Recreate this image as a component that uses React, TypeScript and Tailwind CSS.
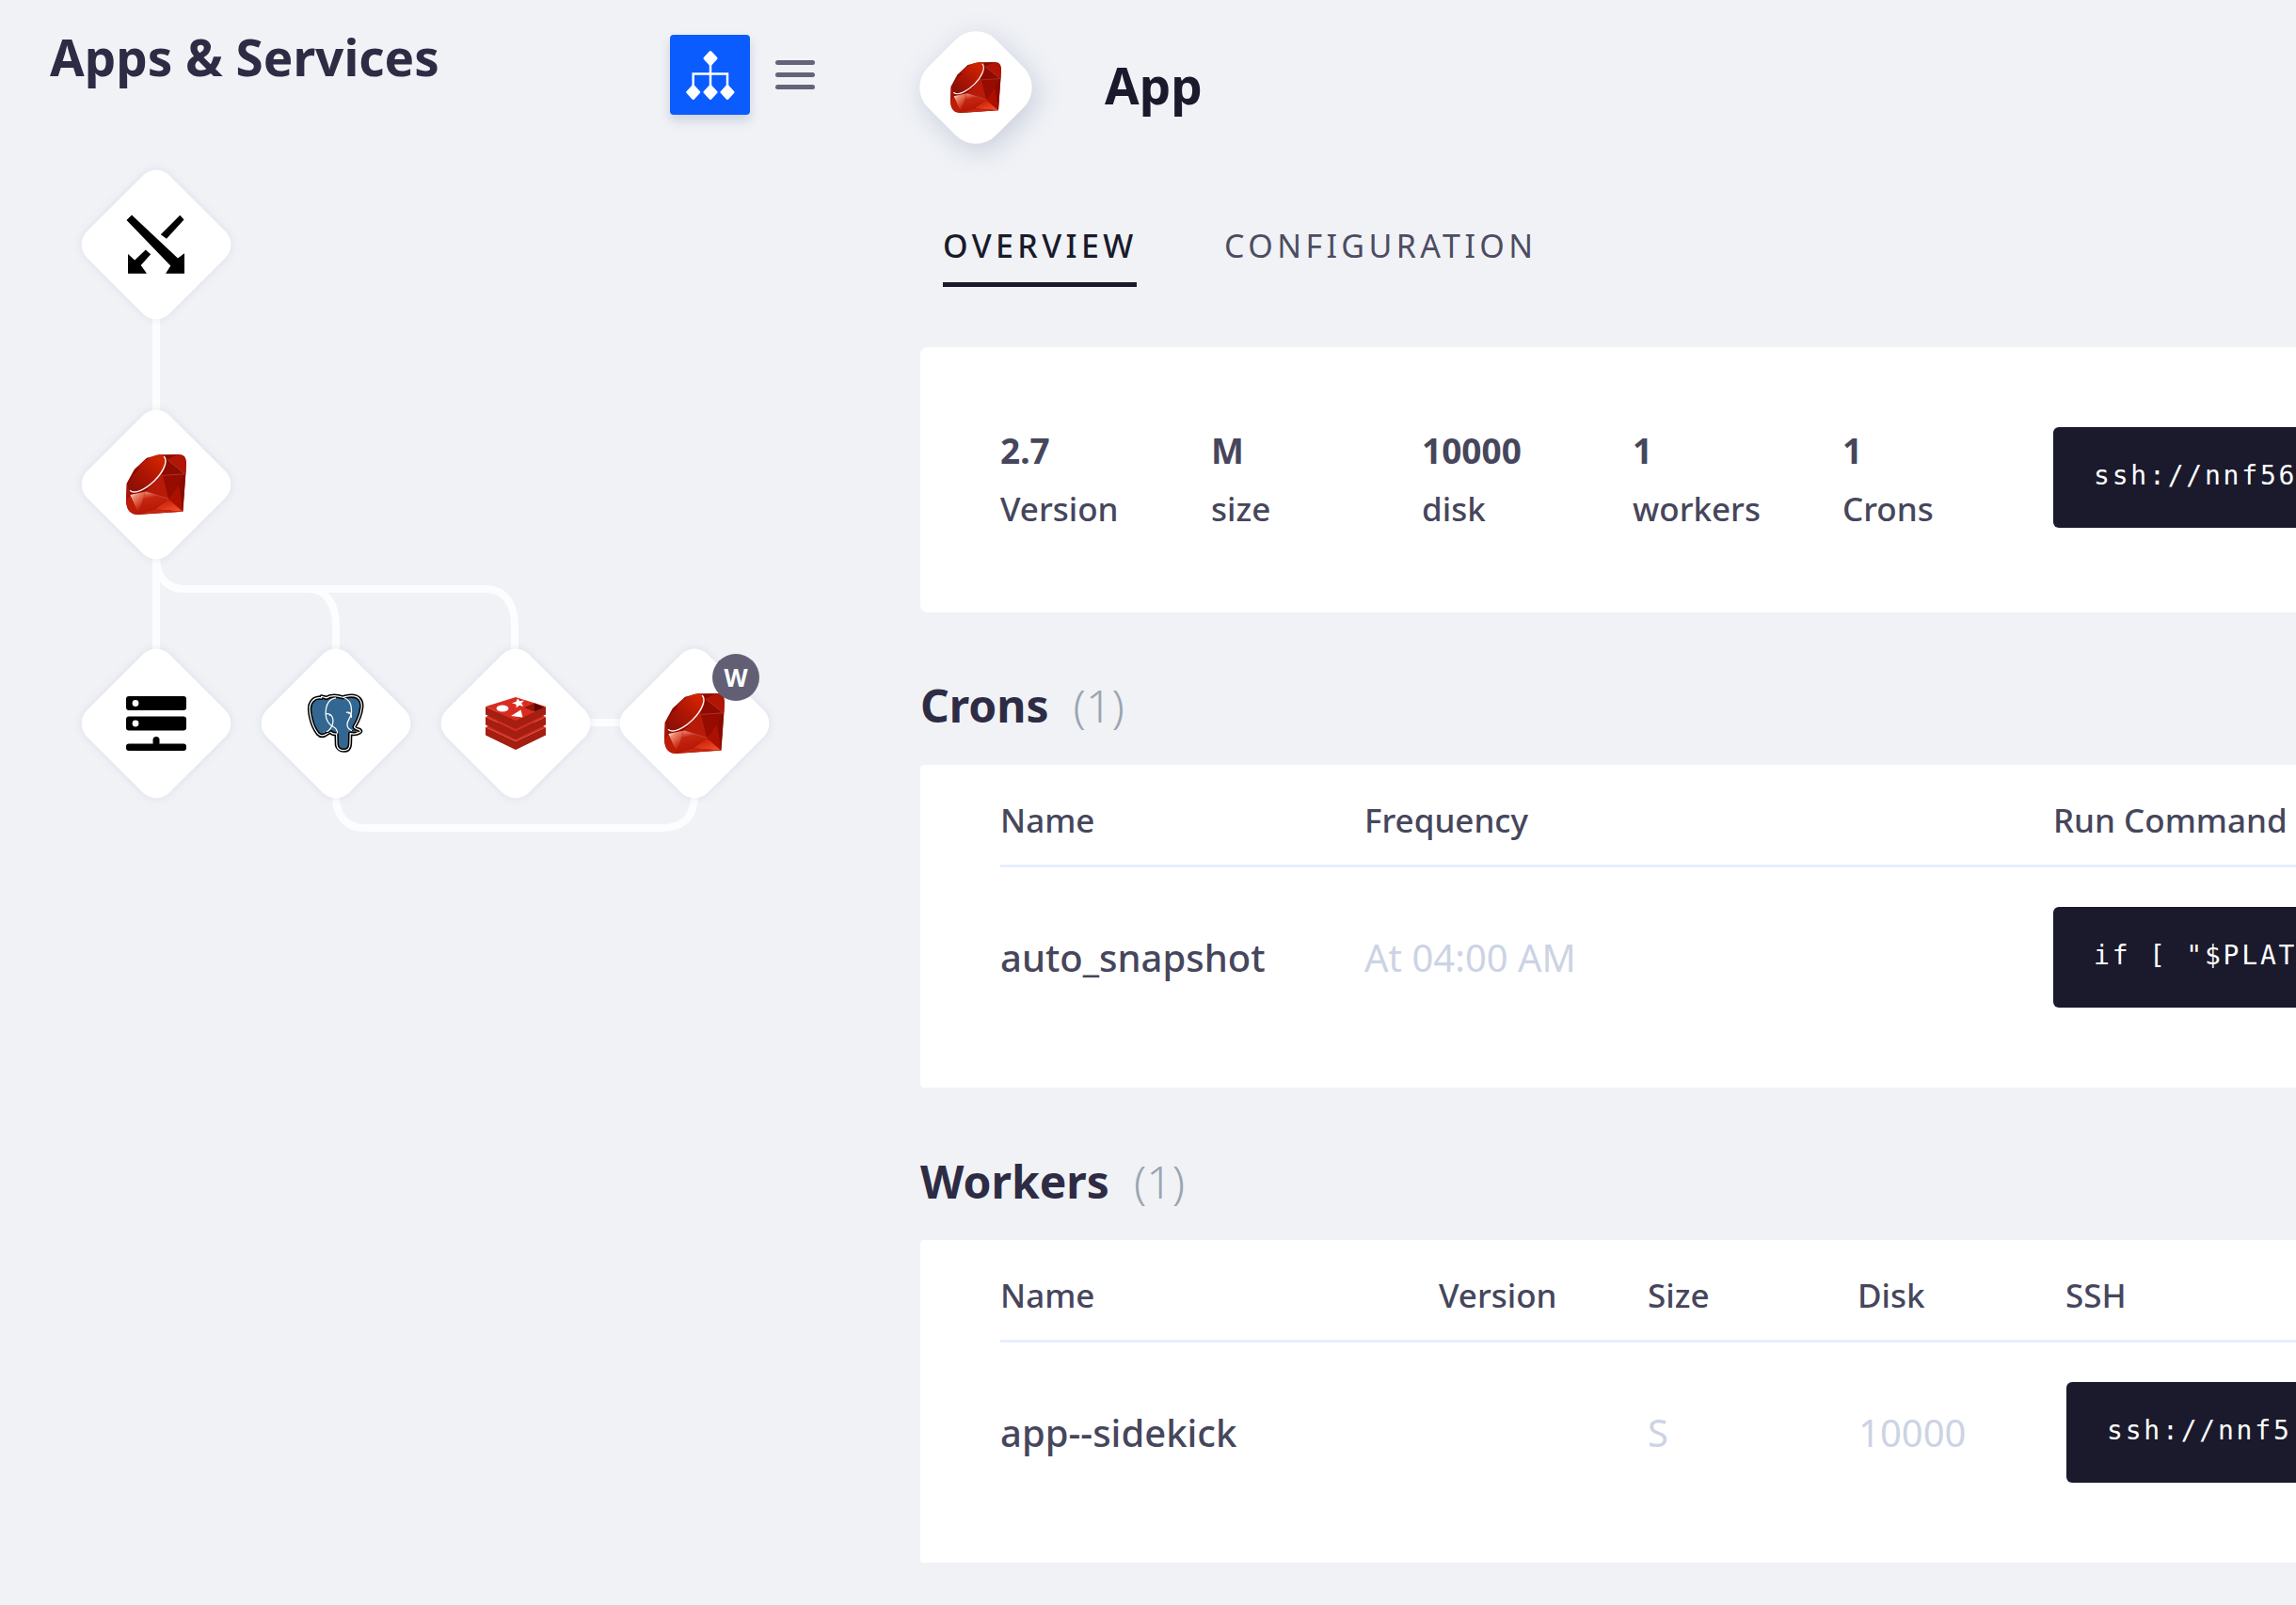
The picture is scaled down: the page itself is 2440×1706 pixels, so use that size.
import React from 'react';

const sans = "font-['Noto_Sans','Open_Sans',sans-serif]";

const Ruby = ({ size = 64 }: { size?: number }) => {
  return (
    <svg width={size} height={size} viewBox="0 0 198.13 197.58">
      <defs>
        <linearGradient id="ruby-b" x1="0.05" y1="0.9" x2="0.8" y2="0.1">
          <stop offset="0" stopColor="#8a0f05" />
          <stop offset="0.55" stopColor="#b01604" />
          <stop offset="1" stopColor="#cf2300" />
        </linearGradient>
        <linearGradient id="ruby-c" x1="0.1" y1="0" x2="0.6" y2="0.8">
          <stop offset="0" stopColor="#ffffff" />
          <stop offset="0.3" stopColor="#f08a72" />
          <stop offset="1" stopColor="#c21c04" />
        </linearGradient>
        <linearGradient id="ruby-d" x1="0.2" y1="0" x2="0.5" y2="1">
          <stop offset="0" stopColor="#f2907a" />
          <stop offset="0.3" stopColor="#c62510" />
          <stop offset="1" stopColor="#b01404" />
        </linearGradient>
        <linearGradient id="ruby-e" x1="0.3" y1="0.2" x2="0.9" y2="1">
          <stop offset="0" stopColor="#cc2206" />
          <stop offset="1" stopColor="#f4532f" />
        </linearGradient>
      </defs>
      <path fill="#8d0a00" d="M172 0c18 0 26 10 26 28l-11 159.600L40 197.600C14 197.600 2 184 0 152L2 95 27 49 68 11 111 .5z" />
      <path fill="#b01505" d="M166 .8c16-1 32 6 32 39L193 64 136 17z" />
      <path fill="#8f0a00" d="M193 64 136 17 120 69z" />
      <path fill="#8a0900" d="M193 64 198 40 187 187.600 174 100.600z" />
      <path fill="#960c00" d="M120 69 193 64 174 100.600 140 146z" />
      <path fill="url(#ruby-e)" d="M187 187.600 140 146 95 180z" />
      <path fill="#ac1000" d="M187 187.600 174 100.600 140 146z" />
      <path fill="#b71a08" d="M140 146 64 122 119 63z" />
      <path fill="url(#ruby-d)" d="M41 197.400 64 122 140 146 95 180z" />
      <path fill="#c62510" d="M95 180 187 187.600 41 197.400z" />
      <path fill="url(#ruby-c)" d="M41 197.400 64 122 13 133z" />
      <path fill="#a81505" d="M.1 152 14 126 2.800 95.700z" />
      <path fill="#bd1c08" d="M.1 152c1 30 14 45 41 45.400L13 133z" />
      <path fill="url(#ruby-b)" d="M42.430 37.730C71.860 8.550 109.800-8.690 124.360 6c14.550 14.690-.88 50.390-30.310 79.560-29.430 29.170-66.900 47.360-81.450 32.670-14.560-14.680.4-41.340 29.830-70.500z" />
      <path fill="none" stroke="#fff" strokeOpacity="0.95" strokeWidth="4.500" d="M124.360 6c14.550 14.690-.88 50.390-30.310 79.560-29.430 29.170-66.900 47.360-81.450 32.670" />
      <path fill="none" stroke="#ffb9a8" strokeOpacity="0.6" strokeWidth="1.200" d="M64 122 140 146M136 17 193 64M120 69 193 64" />
    </svg>
  );
};

const Elephant = () => {
  const outer =
    'M75 30C50 26 33 45 35 72c3 32 14 62 28 80 8 9 20 9 32 0 5-4 8-6 12-5 3 4 10 7 20 6l1 38c2 12 12 19 24 19 13 0 20-8 21-20 1-14 1-28 1-38 12 2 24 1 32-4 6-4 3-8-4-10-7-2-14-4-14-9 10-16 22-40 25-68 2-24-12-38-34-38-12 0-22 3-31 5-9-3-17-5-28-5-14 0-21 3-28 7-6-2-10-4-17-5z';
  return (
    <svg width="62" height="64" viewBox="25 15 200 205" fill="none">
      <path d={outer} fill="#336791" stroke="#000" strokeWidth="14" strokeLinejoin="round" />
      <path d={outer} stroke="#fff" strokeWidth="4" strokeLinejoin="round" />
      <path stroke="#fff" strokeWidth="4" d="M125 30c-22 2-35 22-35 52 0 22 10 38 25 46 10 5 15 12 15 24" />
      <path stroke="#fff" strokeWidth="4" d="M150 28c20 6 30 26 28 52-1 16-12 24-14 38-1 10 3 18 12 22 8 4 20 4 26 8" />
      <path stroke="#fff" strokeWidth="4" d="M90 85c14-4 24 6 25 22 1 14-6 24-12 32-4 6-14 10-20 8" />
      <path stroke="#fff" strokeWidth="4" d="M160 80c12-4 20 4 18 18" />
      <path stroke="#000" strokeWidth="4" d="M85 146c8 4 16 2 22-2M180 142c8 2 14 2 22 0" />
      <circle cx="104" cy="88" r="3" fill="#fff" />
      <circle cx="170" cy="82" r="3" fill="#fff" />
    </svg>
  );
};

const Redis = () => {
  return (
    <svg width="64" height="56" viewBox="0 0 64 56">
      <path fill="#a41e11" d="M0 32v8.500L32 56l32-15.500V32L32 47z" />
      <path fill="#d82c20" d="M0 32l32-14 32 14-32 15z" />
      <path fill="#a41e11" d="M0 21v8.500L32 45l32-15.500V21L32 36z" />
      <path fill="#d82c20" d="M0 21 32 7l32 14-32 15z" />
      <path fill="#a41e11" d="M0 10v8.500L32 34l32-15.500V10L32 25z" />
      <path fill="#d82c20" d="M0 10 32 0l32 10-32 15z" />
      <path fill="#fff" d="M34 1.500l2.300 2.800 4.700-.7-2.800 3 2 3.200-4.400-1-3 2.500-.3-3.500-4.500-1.500 4.400-1.200z" />
      <ellipse cx="18" cy="12" rx="6.500" ry="3.500" fill="#fff" />
      <path fill="#7a0c00" d="M41 11l11-4.500L63 11 52 15.500z" opacity="0.75" />
      <path fill="#5c0700" d="M52 6.500 62 11l-10 4.500z" />
      <path fill="#fff" d="M27 20l10.500-6.500 2 8z" />
    </svg>
  );
};

const Balancer = () => {
  return (
    <svg width="60" height="62" viewBox="0 0 60 62" fill="#000" overflow="visible">
      <path d="M4 -.5 53 45.500 60 40.300V61.700H40L45.300 53.500-1.500 5z" />
      <path d="M55.300 -.2 59.500 4.400 41 24.700 34.800 20.200z" />
      <path d="M18.800 36.400 24.200 41.200 13.700 53 20 61.700H0V41L7.200 47.400z" />
    </svg>
  );
};

const ServerIcon = () => {
  return (
    <svg width="64" height="58" viewBox="0 0 64 58">
      <rect x="0" y="0" width="64" height="15" rx="3" fill="#000" />
      <circle cx="10" cy="7.500" r="3.400" fill="#fff" />
      <rect x="0" y="21.500" width="64" height="15" rx="3" fill="#000" />
      <circle cx="10" cy="29" r="3.400" fill="#fff" />
      <rect x="0" y="50.500" width="64" height="7.500" rx="3" fill="#000" />
      <rect x="28.500" y="43" width="7" height="10" rx="3.500" fill="#000" />
    </svg>
  );
};

const TreeIcon = () => {
  return (
    <svg width="80" height="80" viewBox="0 0 80 80" fill="#fff" stroke="#fff" strokeLinejoin="round">
      <path strokeWidth="3" d="M40 15.500 46 22 40 28.500 34 22z" />
      <path strokeWidth="3" d="M21.700 51.500 27.700 58 21.700 64.500 15.700 58zM40 51.500 46 58 40 64.500 34 58zM58 51.500 64 58 58 64.500 52 58z" />
      <path fill="none" strokeWidth="2.500" strokeLinejoin="miter" d="M40 26V54M21.700 54V38.500H58V54" />
    </svg>
  );
};

const Node = ({ x, y, children, badge }: { x: string; y: string; children: React.ReactNode; badge?: boolean }) => {
  return (
    <div className={`absolute flex h-[160px] w-[160px] items-center justify-center ${x} ${y}`}>
      <div className="absolute h-[124px] w-[124px] rotate-45 rounded-[20px] bg-white shadow-[0_0_10px_rgba(100,115,150,0.14)]" />
      <div className="relative flex items-center justify-center">{children}</div>
      {badge && (
        <div className="absolute left-[99px] top-[6px] flex h-[50px] w-[50px] items-center justify-center rounded-full bg-[#625f75] text-[26px] font-bold text-white">
          W
        </div>
      )}
    </div>
  );
};

const Code = ({ children }: { children: string }) => {
  return (
    <div className="flex h-[107px] w-[400px] flex-none items-center rounded-[6px] bg-[#1a1a2c] pb-[3px] pl-[43px] font-['DejaVu_Sans_Mono',monospace] text-[28px] tracking-[2.8px] whitespace-pre text-white">
      {children}
    </div>
  );
};

const Stat = ({ value, label, width }: { value: string; label: string; width: string }) => {
  return (
    <div className={`flex-none ${width}`}>
      <div className="text-[37px] leading-[62px] font-bold text-[#46465c]">{value}</div>
      <div className="text-[35px] leading-[62px] font-medium text-[#46465c]">{label}</div>
    </div>
  );
};

const SectionTitle = ({ title, count }: { title: string; count: number }) => {
  return (
    <h2 className="text-[48px] leading-[66px] font-bold text-[#2e2c44]">
      {title}
      <span className="ml-[26px] font-light text-[#9aa5b1]">({count})</span>
    </h2>
  );
};

const Sidebar = () => {
  return (
    <aside className="w-[978px] flex-none">
      <div className="flex items-start pt-[35px] pl-[53px]">
        <h1 className="w-[659px] flex-none text-[53px] leading-[52px] font-bold text-[#2e2c44]">Apps &amp; Services</h1>
        <button className="mt-[2px] flex h-[85px] w-[85px] flex-none items-center justify-center rounded-[4px] bg-[#0a5cff] shadow-[0_6px_12px_rgba(60,80,120,0.2)]">
          <TreeIcon />
        </button>
        <div className="mt-[29px] ml-[27px] flex w-[42px] flex-col gap-[8px]">
          <span className="h-[5px] rounded-full bg-[#64637a]" />
          <span className="h-[5px] rounded-full bg-[#64637a]" />
          <span className="h-[5px] rounded-full bg-[#64637a]" />
        </div>
      </div>
      <div className="relative h-[1500px]">
        <svg className="absolute top-0 left-0" width="900" height="800" fill="none" stroke="#fcfdfe" strokeWidth="8">
          <path d="M166 130V640" />
          <path d="M166 470c0 22 12 34 30 34H516c20 0 31 16 31 38v35" />
          <path d="M328 504c18 0 29 16 29 38v35" />
          <path d="M357 716v8c0 22 12 34 30 34H705c20 0 33-12 33-34v-8" />
          <path d="M600 646H680" />
        </svg>
        <Node x="left-[86px]" y="top-[58px]"><Balancer /></Node>
        <Node x="left-[86px]" y="top-[313px]"><Ruby /></Node>
        <Node x="left-[86px]" y="top-[567px]"><ServerIcon /></Node>
        <Node x="left-[277px]" y="top-[567px]"><Elephant /></Node>
        <Node x="left-[468px]" y="top-[567px]"><Redis /></Node>
        <Node x="left-[658px]" y="top-[567px]" badge><Ruby /></Node>
      </div>
    </aside>
  );
};

const App = () => {
  return (
    <div className={`flex h-[1706px] w-[2440px] overflow-hidden bg-[#f0f2f6] ${sans}`}>
      <Sidebar />
      <main className="w-[1700px] flex-none">
        <div className="mt-[33px] -ml-[1px] flex h-[120px] items-center">
          <div className="relative flex h-[120px] w-[120px] items-center justify-center">
            <div className="absolute h-[102px] w-[102px] rotate-45 rounded-[30px] bg-white shadow-[8px_2px_28px_rgba(110,125,160,0.3)]" />
            <div className="relative"><Ruby size={54} /></div>
          </div>
          <h1 className="mb-[4px] ml-[77px] text-[53px] font-bold text-[#1a1a2c]">App</h1>
        </div>

        <div className="mt-[85px] flex pl-[24px] text-[34px] leading-[46px] tracking-[4.400px]">
          <div className="w-[206px] flex-none border-b-[5px] border-[#1a1a2c] pb-[16px] font-medium text-[#1a1a2c]">OVERVIEW</div>
          <div className="ml-[93px] text-[#4d4c62]">CONFIGURATION</div>
        </div>

        <section className="mt-[64px] flex h-[282px] items-center rounded-[8px] bg-white pl-[85px]">
          <Stat value="2.7" label="Version" width="w-[224px]" />
          <Stat value="M" label="size" width="w-[224px]" />
          <Stat value="10000" label="disk" width="w-[224px]" />
          <Stat value="1" label="workers" width="w-[223px]" />
          <Stat value="1" label="Crons" width="w-[224px]" />
          <div className="mb-[5px]"><Code>ssh://nnf56</Code></div>
        </section>

        <div className="mt-[66px]"><SectionTitle title="Crons" count={1} /></div>
        <section className="mt-[30px] h-[343px] rounded-[4px] bg-white pl-[85px]">
          <div className="flex h-[109px] items-center border-b-[3px] border-[#e6effc] pt-[13px] text-[35px] font-medium text-[#46465c]">
            <div className="w-[387px] flex-none">Name</div>
            <div className="w-[732px] flex-none">Frequency</div>
            <div>Run Command</div>
          </div>
          <div className="flex items-center pt-[42px] text-[40px]">
            <div className="w-[387px] flex-none font-medium text-[#46465c]">auto_snapshot</div>
            <div className="w-[732px] flex-none text-[#ccd3e4]">At 04:00 AM</div>
            <Code>{'if [ "$PLAT'}</Code>
          </div>
        </section>

        <div className="mt-[67px]"><SectionTitle title="Workers" count={1} /></div>
        <section className="mt-[29px] h-[343px] rounded-[4px] bg-white pl-[85px]">
          <div className="flex h-[109px] items-center border-b-[3px] border-[#e6effc] pt-[13px] text-[35px] font-medium text-[#46465c]">
            <div className="w-[466px] flex-none">Name</div>
            <div className="w-[222px] flex-none">Version</div>
            <div className="w-[223px] flex-none">Size</div>
            <div className="w-[221px] flex-none">Disk</div>
            <div>SSH</div>
          </div>
          <div className="flex items-center pt-[42px] text-[40px]">
            <div className="w-[688px] flex-none font-medium text-[#46465c]">app--sidekick</div>
            <div className="w-[224px] flex-none text-[#ccd3e4]">S</div>
            <div className="w-[221px] flex-none text-[#ccd3e4]">10000</div>
            <Code>ssh://nnf5</Code>
          </div>
        </section>
      </main>
    </div>
  );
};

export default App;
